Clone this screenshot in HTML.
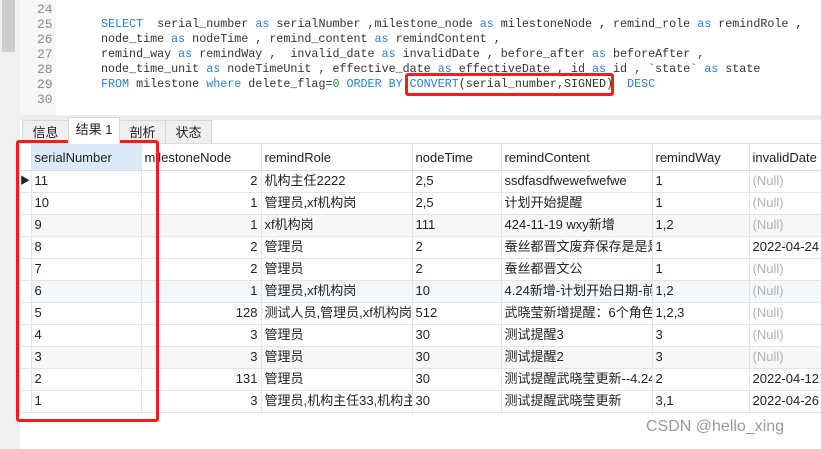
<!DOCTYPE html>
<html><head><meta charset="utf-8"><style>
*{margin:0;padding:0;box-sizing:border-box}
body{width:821px;height:449px;overflow:hidden;background:#fff;position:relative;font-family:"Liberation Sans","Noto Sans CJK SC",sans-serif;font-size:13px;color:#222}
.abs{position:absolute}
#gut{left:0;top:0;width:20px;height:449px;background:#f0f0f0}
#thumb{left:2px;top:0;width:13px;height:52px;background:#cdcdcd}
#ln{left:20px;top:0;width:36px;height:116px;background:#f7f7f7}
.code{font-family:"Liberation Mono",monospace;font-size:11.7px;white-space:pre;line-height:15px;height:15px}
.n{color:#888;left:37px;font-size:13px}
.c{left:101px;color:#333}
.k{color:#2a7fd4}
.g{color:#1ca01c}
#sep{left:20px;top:115px;width:801px;height:5px;background:#eeeeee}
.tab{top:120px;height:24px;background:#efefef;border:1px solid #d8d8d8;border-bottom:none;font-size:13px;line-height:23px;text-align:center}
#grid{left:20px;top:143px;width:801px;border-top:1px solid #ddd;overflow:hidden}
table{border-collapse:collapse;table-layout:fixed;width:810px}
td{height:22px;border-right:1px solid #e4e4e4;border-bottom:1px solid #e4e4e4;padding:0 3px;white-space:nowrap;overflow:hidden;font-size:13px;line-height:19px;padding-bottom:2px}
tr.h td{height:26px;line-height:22px;border-bottom:1px solid #ddd;padding-top:3px;padding-bottom:0}
.r{text-align:right}
.nl{color:#b0b0b0}
tr.a td{background:#f7f7f7}
tr.b td{background:#f3f8fd}
td.i{background:#fff!important}
</style></head><body>
<div class="abs" id="gut"></div><div class="abs" id="thumb"></div>
<div class="abs" id="ln"></div>
<div class="abs code n" style="top:2px">24</div>
<div class="abs code n" style="top:17px">25</div>
<div class="abs code n" style="top:32px">26</div>
<div class="abs code n" style="top:47px">27</div>
<div class="abs code n" style="top:62px">28</div>
<div class="abs code n" style="top:77px">29</div>
<div class="abs code n" style="top:92px">30</div>
<div class="abs code c" style="top:17px"><span class="k">SELECT</span>  serial_number <span class="k">as</span> serialNumber ,milestone_node <span class="k">as</span> milestoneNode , remind_role <span class="k">as</span> remindRole ,</div>
<div class="abs code c" style="top:32px">node_time <span class="k">as</span> nodeTime , remind_content <span class="k">as</span> remindContent ,</div>
<div class="abs code c" style="top:47px">remind_way <span class="k">as</span> remindWay ,  invalid_date <span class="k">as</span> invalidDate , before_after <span class="k">as</span> beforeAfter ,</div>
<div class="abs code c" style="top:62px">node_time_unit <span class="k">as</span> nodeTimeUnit , effective_date <span class="k">as</span> effectiveDate , id <span class="k">as</span> id , `state` <span class="k">as</span> state</div>
<div class="abs code c" style="top:77px"><span class="k">FROM</span> milestone <span class="k">where</span> delete_flag=<span class="g">0</span> <span class="k">ORDER BY</span> <span class="k">CONVERT</span>(serial_number,SIGNED)  <span class="k">DESC</span></div>
<div class="abs" style="left:405px;top:73px;width:209px;height:23px;border:3px solid #f01e1e;border-radius:3px"></div>
<div class="abs" id="sep"></div>
<div class="abs tab" style="left:22px;width:47px">信息</div>
<div class="abs tab" style="left:68px;width:52px;top:117px;height:27px;background:#fff;z-index:2">结果 1</div>
<div class="abs tab" style="left:119px;width:47px">剖析</div>
<div class="abs tab" style="left:165px;width:47px">状态</div>
<div class="abs" id="grid"><table>
<colgroup><col style="width:11px"><col style="width:110px"><col style="width:120px"><col style="width:151px"><col style="width:89px"><col style="width:151px"><col style="width:97px"><col style="width:81px"></colgroup>
<tr class="h"><td></td><td style="background:#dce9f6">serialNumber</td><td>milestoneNode</td><td>remindRole</td><td>nodeTime</td><td>remindContent</td><td>remindWay</td><td>invalidDate</td></tr>
<tr><td class="i" style="padding:0;font-size:10px">▶</td><td>11</td><td class="r">2</td><td>机构主任2222</td><td>2,5</td><td>ssdfasdfwewefwefwe</td><td>1</td><td class="nl">(Null)</td></tr>
<tr><td class="i"></td><td>10</td><td class="r">1</td><td>管理员,xf机构岗</td><td>2,5</td><td>计划开始提醒</td><td>1</td><td class="nl">(Null)</td></tr>
<tr class="a"><td class="i"></td><td>9</td><td class="r">1</td><td>xf机构岗</td><td>111</td><td>424-11-19 wxy新增</td><td>1,2</td><td class="nl">(Null)</td></tr>
<tr><td class="i"></td><td>8</td><td class="r">2</td><td>管理员</td><td>2</td><td>蚕丝都晋文废弃保存是是是</td><td>1</td><td>2022-04-24</td></tr>
<tr><td class="i"></td><td>7</td><td class="r">2</td><td>管理员</td><td>2</td><td>蚕丝都晋文公</td><td>1</td><td class="nl">(Null)</td></tr>
<tr class="b"><td class="i"></td><td>6</td><td class="r">1</td><td>管理员,xf机构岗</td><td>10</td><td>4.24新增-计划开始日期-前-</td><td>1,2</td><td class="nl">(Null)</td></tr>
<tr><td class="i"></td><td>5</td><td class="r">128</td><td>测试人员,管理员,xf机构岗,机构</td><td>512</td><td>武晓莹新增提醒：6个角色、</td><td>1,2,3</td><td class="nl">(Null)</td></tr>
<tr><td class="i"></td><td>4</td><td class="r">3</td><td>管理员</td><td>30</td><td>测试提醒3</td><td>3</td><td class="nl">(Null)</td></tr>
<tr class="a"><td class="i"></td><td>3</td><td class="r">3</td><td>管理员</td><td>30</td><td>测试提醒2</td><td>3</td><td class="nl">(Null)</td></tr>
<tr><td class="i"></td><td>2</td><td class="r">131</td><td>管理员</td><td>30</td><td>测试提醒武晓莹更新--4.24-:</td><td>2</td><td>2022-04-12</td></tr>
<tr><td class="i"></td><td>1</td><td class="r">3</td><td>管理员,机构主任33,机构主任</td><td>30</td><td>测试提醒武晓莹更新</td><td>3,1</td><td>2022-04-26</td></tr>
</table></div>
<div class="abs" style="left:16px;top:140px;width:143px;height:282px;border:3px solid #f01e1e;border-radius:3px"></div>
<div class="abs" style="left:646px;top:418px;font-size:16px;color:#9a9a9a">CSDN @hello_xing</div>
</body></html>
